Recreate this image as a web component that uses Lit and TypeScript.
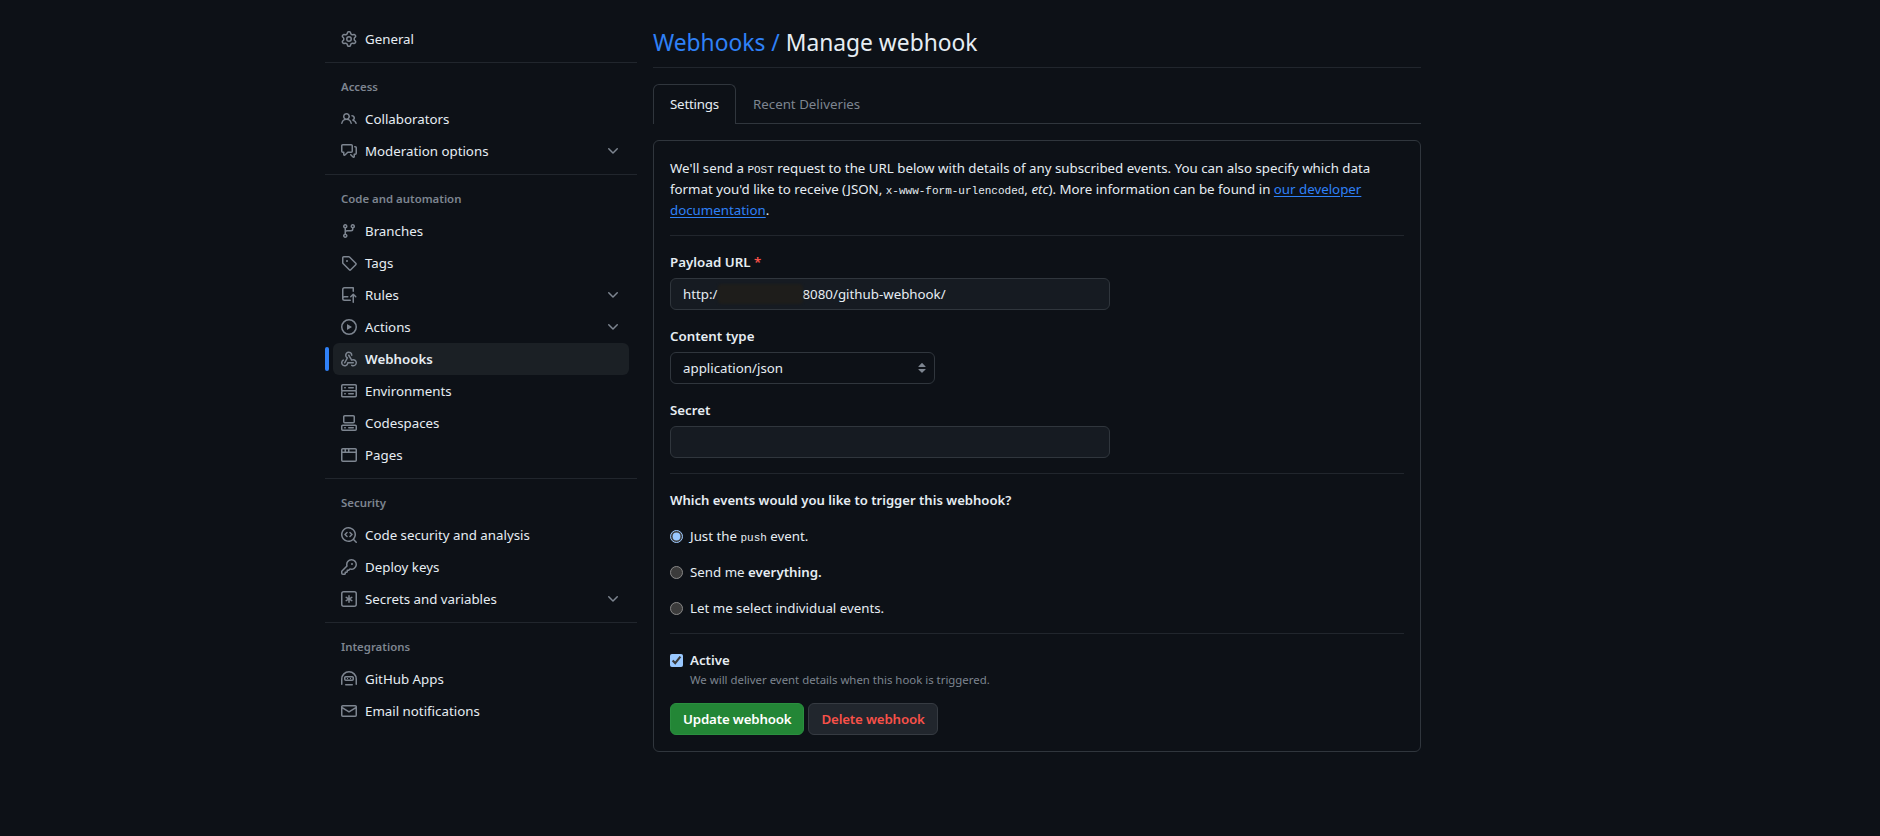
import { LitElement, html, css } from 'lit';
import { customElement } from 'lit/decorators.js';

// octicons, 16px grid
const ICONS: Record<string, string> = {
    gear: 'M8 0a8.2 8.2 0 0 1 .701.031C9.444.095 9.99.645 10.16 1.29l.288 1.107c.018.066.079.158.212.224.231.114.454.243.668.386.123.082.233.09.299.071l1.103-.303c.644-.176 1.392.021 1.82.63.27.385.506.792.704 1.218.315.675.111 1.422-.364 1.891l-.814.806c-.049.048-.098.147-.088.294.016.257.016.515 0 .772-.01.147.038.246.088.294l.814.806c.475.469.679 1.216.364 1.891a7.977 7.977 0 0 1-.704 1.217c-.428.61-1.176.807-1.82.63l-1.102-.302c-.067-.019-.177-.011-.3.071a5.909 5.909 0 0 1-.668.386c-.133.066-.194.158-.211.224l-.29 1.106c-.168.646-.715 1.196-1.458 1.26a8.006 8.006 0 0 1-1.402 0c-.743-.064-1.289-.614-1.458-1.26l-.289-1.106c-.018-.066-.079-.158-.212-.224a5.738 5.738 0 0 1-.668-.386c-.123-.082-.233-.09-.299-.071l-1.103.303c-.644.176-1.392-.021-1.82-.63a8.12 8.12 0 0 1-.704-1.218c-.315-.675-.111-1.422.363-1.891l.815-.806c.05-.048.098-.147.088-.294a6.214 6.214 0 0 1 0-.772c.01-.147-.038-.246-.088-.294l-.815-.806C.635 6.045.431 5.298.746 4.623a7.92 7.92 0 0 1 .704-1.217c.428-.61 1.176-.807 1.82-.63l1.102.302c.067.019.177.011.3-.071.214-.143.437-.272.668-.386.133-.066.194-.158.211-.224l.29-1.106C6.009.645 6.556.095 7.299.03 7.53.01 7.764 0 8 0Zm-.571 1.525c-.036.003-.108.036-.137.146l-.289 1.105c-.147.561-.549.967-.998 1.189-.173.086-.34.183-.5.29-.417.278-.97.423-1.529.27l-1.103-.303c-.109-.03-.175.016-.195.045-.22.312-.412.644-.573.99-.014.031-.021.11.059.19l.815.806c.411.406.562.957.53 1.456a4.709 4.709 0 0 0 0 .582c.032.499-.119 1.05-.53 1.456l-.815.806c-.081.08-.073.159-.059.19.162.346.353.677.573.989.02.03.085.076.195.046l1.102-.303c.56-.153 1.113-.008 1.53.27.161.107.328.204.501.29.447.222.85.629.997 1.189l.289 1.105c.029.109.101.143.137.146a6.6 6.6 0 0 0 1.142 0c.036-.003.108-.036.137-.146l.289-1.105c.147-.561.549-.967.998-1.189.173-.086.34-.183.5-.29.417-.278.97-.423 1.529-.27l1.103.303c.109.029.175-.016.195-.045.22-.313.411-.644.573-.99.014-.031.021-.11-.059-.19l-.815-.806c-.411-.406-.562-.957-.53-1.456a4.709 4.709 0 0 0 0-.582c-.032-.499.119-1.05.53-1.456l.815-.806c.081-.08.073-.159.059-.19a6.464 6.464 0 0 0-.573-.989c-.02-.03-.085-.076-.195-.046l-1.102.303c-.56.153-1.113.008-1.53-.27a4.44 4.44 0 0 0-.501-.29c-.447-.222-.85-.629-.997-1.189l-.289-1.105c-.029-.11-.101-.143-.137-.146a6.6 6.6 0 0 0-1.142 0ZM11 8a3 3 0 1 1-6 0 3 3 0 0 1 6 0ZM9.5 8a1.5 1.5 0 1 0-3.001.001A1.5 1.5 0 0 0 9.5 8Z',
    people: 'M2 5.5a3.5 3.5 0 1 1 5.898 2.549 5.508 5.508 0 0 1 3.034 4.084.75.75 0 1 1-1.482.235 4 4 0 0 0-7.9 0 .75.75 0 0 1-1.482-.236A5.507 5.507 0 0 1 3.102 8.05 3.493 3.493 0 0 1 2 5.5ZM11 4a3.001 3.001 0 0 1 2.22 5.018 5.01 5.01 0 0 1 2.56 3.012.749.749 0 0 1-.885.954.752.752 0 0 1-.549-.514 3.507 3.507 0 0 0-2.522-2.372.75.75 0 0 1-.574-.73v-.352a.75.75 0 0 1 .416-.672A1.5 1.5 0 0 0 11 5.5.75.75 0 0 1 11 4Zm-5.5-.5a2 2 0 1 0-.001 3.999A2 2 0 0 0 5.5 3.5Z',
    discussion: 'M1.75 1h8.5c.966 0 1.75.784 1.75 1.75v5.5A1.75 1.75 0 0 1 10.25 10H7.061l-2.574 2.573A1.458 1.458 0 0 1 2 11.543V10h-.25A1.75 1.75 0 0 1 0 8.25v-5.5C0 1.784.784 1 1.75 1ZM1.5 2.75v5.5c0 .138.112.25.25.25h1a.75.75 0 0 1 .75.75v2.19l2.72-2.72a.749.749 0 0 1 .53-.22h3.5a.25.25 0 0 0 .25-.25v-5.5a.25.25 0 0 0-.25-.25h-8.5a.25.25 0 0 0-.25.25Zm13 2a.25.25 0 0 0-.25-.25h-.5a.75.75 0 0 1 0-1.5h.5c.966 0 1.75.784 1.75 1.75v5.5A1.75 1.75 0 0 1 14.25 12H14v1.543a1.458 1.458 0 0 1-2.487 1.03L9.22 12.28a.749.749 0 0 1 .326-1.275.749.749 0 0 1 .734.215l2.22 2.22v-2.19a.75.75 0 0 1 .75-.75h1a.25.25 0 0 0 .25-.25Z',
    branch: 'M9.5 3.25a2.25 2.25 0 1 1 3 2.122V6A2.5 2.5 0 0 1 10 8.5H6a1 1 0 0 0-1 1v1.128a2.251 2.251 0 1 1-1.5 0V5.372a2.25 2.25 0 1 1 1.5 0v1.836A2.493 2.493 0 0 1 6 7h4a1 1 0 0 0 1-1v-.628A2.25 2.25 0 0 1 9.5 3.25Zm-6 0a.75.75 0 1 0 1.5 0 .75.75 0 0 0-1.5 0Zm8.25-.75a.75.75 0 1 0 0 1.5.75.75 0 0 0 0-1.5ZM4.25 12a.75.75 0 1 0 0 1.5.75.75 0 0 0 0-1.5Z',
    tag: 'M1 7.775V2.75C1 1.784 1.784 1 2.75 1h5.025c.464 0 .91.184 1.238.513l6.25 6.25a1.75 1.75 0 0 1 0 2.474l-5.026 5.026a1.75 1.75 0 0 1-2.474 0l-6.25-6.25A1.752 1.752 0 0 1 1 7.775Zm1.5 0c0 .066.026.13.073.177l6.25 6.25a.25.25 0 0 0 .354 0l5.025-5.025a.25.25 0 0 0 0-.354l-6.25-6.25a.25.25 0 0 0-.177-.073H2.75a.25.25 0 0 0-.25.25ZM6 5a1 1 0 1 1 0 2 1 1 0 0 1 0-2Z',
    rules: 'M1 2.5A2.5 2.5 0 0 1 3.5 0h8.75a.75.75 0 0 1 .75.75v3.5a.75.75 0 0 1-1.5 0V1.5h-8a1 1 0 0 0-1 1v6.708A2.493 2.493 0 0 1 3.5 9h3.25a.75.75 0 0 1 0 1.5H3.5a1 1 0 0 0 0 2h5.75a.75.75 0 0 1 0 1.5H3.5A2.5 2.5 0 0 1 1 11.5Zm13.23 7.79h-.001l-1.224-1.224v6.184a.75.75 0 0 1-1.5 0V9.066L10.28 10.29a.75.75 0 0 1-1.06-1.061l2.505-2.504a.75.75 0 0 1 1.06 0L15.29 9.23a.751.751 0 0 1-.018 1.042.751.751 0 0 1-1.042.018Z',
    play: 'M8 0a8 8 0 1 1 0 16A8 8 0 0 1 8 0ZM1.5 8a6.5 6.5 0 1 0 13 0 6.5 6.5 0 0 0-13 0Zm4.879-2.773 4.264 2.559a.25.25 0 0 1 0 .428l-4.264 2.559A.25.25 0 0 1 6 10.559V5.442a.25.25 0 0 1 .379-.215Z',
    webhook: 'M5.5 4.25a2.25 2.25 0 0 1 4.5 0 .75.75 0 0 0 1.5 0 3.75 3.75 0 1 0-6.14 2.889l-2.272 4.258a.75.75 0 0 0 1.324.706L7 7.25a.75.75 0 0 0-.309-1.015A2.25 2.25 0 0 1 5.5 4.25Z M7.364 3.607a.75.75 0 0 1 1.03.257l2.608 4.349a3.75 3.75 0 1 1-.628 6.785.75.75 0 0 1 .752-1.299 2.25 2.25 0 1 0-.033-3.88.75.75 0 0 1-1.03-.256L7.107 4.636a.75.75 0 0 1 .257-1.03Z M2.9 8.776A.75.75 0 0 1 2.625 9.8 2.25 2.25 0 1 0 6 11.75a.75.75 0 0 1 .75-.751h5.5a.75.75 0 0 1 0 1.5H7.425a3.751 3.751 0 1 1-5.55-3.998.75.75 0 0 1 1.024.274Z',
    server: 'M1.75 1h12.5c.966 0 1.75.784 1.75 1.75v4c0 .372-.116.717-.314 1 .198.283.314.628.314 1v4a1.75 1.75 0 0 1-1.75 1.75H1.75A1.75 1.75 0 0 1 0 13.25v-4c0-.372.116-.717.314-1a1.739 1.739 0 0 1-.314-1v-4C0 1.784.784 1 1.75 1ZM1.5 2.75v4c0 .138.112.25.25.25h12.5a.25.25 0 0 0 .25-.25v-4a.25.25 0 0 0-.25-.25H1.75a.25.25 0 0 0-.25.25Zm.25 5.75a.25.25 0 0 0-.25.25v4c0 .138.112.25.25.25h12.5a.25.25 0 0 0 .25-.25v-4a.25.25 0 0 0-.25-.25ZM7 4.75A.75.75 0 0 1 7.75 4h4.5a.75.75 0 0 1 0 1.5h-4.5A.75.75 0 0 1 7 4.75ZM7.75 10h4.5a.75.75 0 0 1 0 1.5h-4.5a.75.75 0 0 1 0-1.5ZM3 4.75A.75.75 0 0 1 3.75 4h.5a.75.75 0 0 1 0 1.5h-.5A.75.75 0 0 1 3 4.75ZM3.75 10h.5a.75.75 0 0 1 0 1.5h-.5a.75.75 0 0 1 0-1.5Z',
    codespaces: 'M0 11.25c0-.966.784-1.75 1.75-1.75h12.5c.966 0 1.75.784 1.75 1.75v3A1.75 1.75 0 0 1 14.25 16H1.75A1.75 1.75 0 0 1 0 14.25Zm2-9.5C2 .784 2.784 0 3.75 0h8.5C13.216 0 14 .784 14 1.75v5a1.75 1.75 0 0 1-1.75 1.75h-8.5A1.75 1.75 0 0 1 2 6.75Zm1.75-.25a.25.25 0 0 0-.25.25v5c0 .138.112.25.25.25h8.5a.25.25 0 0 0 .25-.25v-5a.25.25 0 0 0-.25-.25Zm-2 9.5a.25.25 0 0 0-.25.25v3c0 .138.112.25.25.25h12.5a.25.25 0 0 0 .25-.25v-3a.25.25 0 0 0-.25-.25Z M7 12.75a.75.75 0 0 1 .75-.75h4.5a.75.75 0 0 1 0 1.5h-4.5a.75.75 0 0 1-.75-.75Zm-4 0a.75.75 0 0 1 .75-.75h.5a.75.75 0 0 1 0 1.5h-.5a.75.75 0 0 1-.75-.75Z',
    browser: 'M0 2.75C0 1.784.784 1 1.75 1h12.5c.966 0 1.75.784 1.75 1.75v10.5A1.75 1.75 0 0 1 14.25 15H1.75A1.75 1.75 0 0 1 0 13.25ZM14.5 6h-13v7.25c0 .138.112.25.25.25h12.5a.25.25 0 0 0 .25-.25Zm-6-3.5v2h6v-1.75a.25.25 0 0 0-.25-.25ZM5 2.5v2h2v-2Zm-3.25 0a.25.25 0 0 0-.25.25V4.5h2v-2Z',
    codescan: 'M8.47 4.97a.75.75 0 0 0 0 1.06L9.94 7.5 8.47 8.97a.75.75 0 1 0 1.06 1.06l2-2a.75.75 0 0 0 0-1.06l-2-2a.75.75 0 0 0-1.06 0ZM6.53 6.03a.75.75 0 0 0-1.06-1.06l-2 2a.75.75 0 0 0 0 1.06l2 2a.75.75 0 1 0 1.06-1.06L5.06 7.5l1.47-1.47Z M12.246 13.307a7.501 7.501 0 1 1 1.06-1.06l2.474 2.473a.749.749 0 0 1-.326 1.275.749.749 0 0 1-.734-.215ZM1.5 7.5a6.002 6.002 0 0 0 3.608 5.504 6.002 6.002 0 0 0 6.486-1.117.748.748 0 0 1 .292-.293A6 6 0 1 0 1.5 7.5Z',
    key: 'M10.5 0a5.499 5.499 0 1 1-1.288 10.848l-.932.932a.749.749 0 0 1-.53.22H7v.75a.749.749 0 0 1-.22.53l-.5.5a.749.749 0 0 1-.53.22H5v.75a.749.749 0 0 1-.22.53l-.5.5a.749.749 0 0 1-.53.22h-2A1.75 1.75 0 0 1 0 14.25v-2c0-.199.079-.389.22-.53l4.932-4.932A5.5 5.5 0 0 1 10.5 0Zm-4 5.5c-.001.431.069.86.205 1.269a.75.75 0 0 1-.181.768L1.5 12.56v1.69c0 .138.112.25.25.25h1.69l.06-.06v-1.19a.75.75 0 0 1 .75-.75h1.19l.06-.06v-1.19a.75.75 0 0 1 .75-.75h1.19l1.023-1.025a.75.75 0 0 1 .768-.18A4 4 0 1 0 6.5 5.5ZM11 6a1 1 0 1 1 0-2 1 1 0 0 1 0 2Z',
    asterisk: 'M0 2.75A2.75 2.75 0 0 1 2.75 0h10.5A2.75 2.75 0 0 1 16 2.75v10.5A2.75 2.75 0 0 1 13.25 16H2.75A2.75 2.75 0 0 1 0 13.25ZM2.75 1.5c-.69 0-1.25.56-1.25 1.25v10.5c0 .69.56 1.25 1.25 1.25h10.5c.69 0 1.25-.56 1.25-1.25V2.75c0-.69-.56-1.25-1.25-1.25Z M8 4a.75.75 0 0 1 .75.75V6.7l1.69-.975a.75.75 0 0 1 .75 1.3L9.5 8l1.69.976a.75.75 0 0 1-.75 1.299L8.75 9.3v1.95a.75.75 0 0 1-1.5 0V9.3l-1.69.975a.751.751 0 0 1-1.025-.275.75.75 0 0 1 .275-1.024L6.5 8l-1.69-.976a.75.75 0 0 1 .75-1.298l1.69.975V4.75A.75.75 0 0 1 8 4Z',
    hubot: 'M0 8a8 8 0 0 1 16 0v5.25a.75.75 0 0 1-1.5 0V8a6.5 6.5 0 1 0-13 0v5.25a.75.75 0 0 1-1.5 0Z M4.75 5h6.5C12.216 5 13 5.784 13 6.75v1.5A1.75 1.75 0 0 1 11.25 10h-6.5A1.75 1.75 0 0 1 3 8.25v-1.5C3 5.784 3.784 5 4.75 5Zm0 1.5a.25.25 0 0 0-.25.25v1.5c0 .138.112.25.25.25h6.5a.25.25 0 0 0 .25-.25v-1.5a.25.25 0 0 0-.25-.25ZM6 7h1v1H6Zm3 0h1v1H9ZM4.75 13h6.5a.75.75 0 0 1 0 1.5h-6.5a.75.75 0 0 1 0-1.5Z',
    mail: 'M1.75 2h12.5c.966 0 1.75.784 1.75 1.75v8.5A1.75 1.75 0 0 1 14.25 14H1.75A1.75 1.75 0 0 1 0 12.25v-8.5C0 2.784.784 2 1.75 2ZM1.5 12.251c0 .138.112.25.25.25h12.5a.25.25 0 0 0 .25-.25V5.809L8.38 9.397a.75.75 0 0 1-.76 0L1.5 5.809v6.442Zm13-8.181v-.32a.25.25 0 0 0-.25-.25H1.75a.25.25 0 0 0-.25.25v.32L8 7.88Z',
    chevron: 'M12.78 5.22a.749.749 0 0 1 0 1.06l-4.25 4.25a.749.749 0 0 1-1.06 0L3.22 6.28a.749.749 0 1 1 1.06-1.06L8 8.939l3.72-3.719a.749.749 0 0 1 1.06 0Z',
};

interface NavItem {
    icon: string;
    label: string;
    more?: boolean;
    active?: boolean;
}

interface NavGroup {
    title?: string;
    items: NavItem[];
}

const NAV: NavGroup[] = [
    { items: [{ icon: 'gear', label: 'General' }] },
    {
        title: 'Access',
        items: [
            { icon: 'people', label: 'Collaborators' },
            { icon: 'discussion', label: 'Moderation options', more: true },
        ],
    },
    {
        title: 'Code and automation',
        items: [
            { icon: 'branch', label: 'Branches' },
            { icon: 'tag', label: 'Tags' },
            { icon: 'rules', label: 'Rules', more: true },
            { icon: 'play', label: 'Actions', more: true },
            { icon: 'webhook', label: 'Webhooks', active: true },
            { icon: 'server', label: 'Environments' },
            { icon: 'codespaces', label: 'Codespaces' },
            { icon: 'browser', label: 'Pages' },
        ],
    },
    {
        title: 'Security',
        items: [
            { icon: 'codescan', label: 'Code security and analysis' },
            { icon: 'key', label: 'Deploy keys' },
            { icon: 'asterisk', label: 'Secrets and variables', more: true },
        ],
    },
    {
        title: 'Integrations',
        items: [
            { icon: 'hubot', label: 'GitHub Apps' },
            { icon: 'mail', label: 'Email notifications' },
        ],
    },
];

const icon = (name: string) => html`<svg class="icon" viewBox="0 0 16 16" fill="currentColor">
    <path fill-rule="evenodd" d=${ICONS[name]}></path>
</svg>`;

@customElement('app-root')
export class AppRoot extends LitElement {
    static override styles = css`
        :host {
            display: block;
            min-height: 100vh;
            background: #0d1117;
            color: #e6edf3;
            font-family: 'Noto Sans', sans-serif;
            font-size: 13.3px;
            line-height: 21px;
        }
        .page {
            display: flex;
            gap: 16px;
            width: 1096px;
            margin-left: 325px;
            padding-top: 23px;
        }

        /* sidebar */
        .side {
            width: 312px;
            flex: none;
        }
        .group + .group {
            margin-top: 7px;
            border-top: 1px solid #21262d;
            padding-top: 8px;
        }
        .group-title {
            height: 32px;
            box-sizing: border-box;
            padding: 0 0 2px 16px;
            display: flex;
            align-items: center;
            font-size: 11.4px;
            font-weight: 600;
            color: #7d8590;
        }
        .row {
            position: relative;
            display: flex;
            align-items: center;
            height: 32px;
            margin: 0 8px;
            padding: 0 8px;
            border-radius: 6px;
        }
        .row .icon {
            color: #7d8590;
            margin-right: 8px;
        }
        .row .chev {
            margin-left: auto;
            margin-right: 0;
        }
        .row.active {
            background: #1b2025;
            font-weight: 600;
        }
        .row.active::before {
            content: '';
            position: absolute;
            left: -8px;
            top: 4px;
            width: 4px;
            height: 24px;
            border-radius: 6px;
            background: #2f81f7;
        }
        .icon {
            width: 16px;
            height: 16px;
            flex: none;
        }

        /* main column */
        .main {
            width: 768px;
            flex: none;
        }
        .head {
            padding: 5px 0 9px;
            border-bottom: 1px solid #21262d;
        }
        h1 {
            margin: 0;
            font-size: 22.8px;
            line-height: 30px;
            font-weight: 400;
        }
        a {
            color: #2f81f7;
            text-decoration: none;
        }
        .tabs {
            display: flex;
            height: 40px;
            margin-top: 16px;
            border-bottom: 1px solid #30363d;
            box-sizing: border-box;
        }
        .tab {
            height: 40px;
            box-sizing: border-box;
            padding: 9px 16px;
            border: 1px solid transparent;
            border-bottom: 0;
            border-radius: 6px 6px 0 0;
            color: #7d8590;
        }
        .tab.on {
            color: #e6edf3;
            letter-spacing: -0.2px;
            border-color: #30363d;
            background: #0d1117;
        }
        .box {
            margin-top: 16px;
            padding: 16px;
            border: 1px solid #30363d;
            border-radius: 6px;
        }
        .box p {
            margin: 1px 0 -1px;
        }
        .box p a {
            text-decoration: underline;
            text-underline-offset: 2px;
        }
        code {
            font-family: 'Liberation Mono', monospace;
            font-size: 11px;
            line-height: 0;
        }
        b {
            font-weight: 600;
        }
        hr {
            border: 0;
            border-top: 1px solid #21262d;
            margin: 15px 0 0;
        }
        .label {
            display: block;
            height: 20px;
            line-height: 20px;
            font-weight: 600;
            margin: 16px 0 6px;
        }
        .req {
            color: #f85149;
        }
        .field {
            display: flex;
            align-items: center;
            width: 440px;
            height: 32px;
            box-sizing: border-box;
            padding: 0 12px;
            background: #161b22;
            border: 1px solid #30363d;
            border-radius: 6px;
        }
        .blur {
            width: 85px;
            height: 20px;
            flex: none;
            border-radius: 4px;
            background: #1e1d1b;
            filter: blur(1px);
        }
        .select {
            position: relative;
            width: 265px;
            height: 32px;
        }
        .select select {
            appearance: none;
            width: 100%;
            height: 100%;
            padding: 0 12px;
            background: #0d1117;
            color: #e6edf3;
            border: 1px solid #30363d;
            border-radius: 6px;
            font: inherit;
        }
        .select svg {
            position: absolute;
            right: 5px;
            top: 8px;
            width: 16px;
            height: 16px;
            fill: #7d8590;
        }
        .ask {
            height: 20px;
            line-height: 20px;
            font-size: 13.1px;
            font-weight: 600;
            margin: 16px 0;
        }
        .radios {
            display: flex;
            flex-direction: column;
            gap: 15px;
        }
        .opt {
            display: flex;
            align-items: center;
            gap: 7px;
            height: 21px;
            white-space: pre;
        }
        input {
            color-scheme: dark;
            width: 13px;
            height: 13px;
            margin: 0;
        }
        .active-row {
            margin-top: 16px;
            font-weight: 600;
            height: 20px;
            line-height: 20px;
        }
        .note {
            margin-left: 20px;
            margin-top: 1px;
            font-size: 11.4px;
            line-height: 18px;
            color: #7d8590;
        }
        .actions {
            display: flex;
            gap: 4px;
            margin-top: 14px;
        }
        .btn {
            height: 32px;
            padding: 0 12px;
            box-sizing: border-box;
            border-radius: 6px;
            border: 1px solid #363b42;
            background: #21262d;
            color: #f85149;
            font: inherit;
            font-weight: 600;
            letter-spacing: -0.17px;
        }
        .btn.primary {
            background: #238636;
            border-color: #2a8f3f;
            color: #fff;
        }
    `;

    private renderRow(item: NavItem) {
        return html`<div class="row ${item.active ? 'active' : ''}">
            ${icon(item.icon)}
            <span>${item.label}</span>
            ${item.more
                ? html`<svg class="icon chev" viewBox="0 0 16 16" fill="currentColor"><path d=${ICONS.chevron}></path></svg>`
                : ''}
        </div>`;
    }

    override render() {
        return html`
            <div class="page">
                <nav class="side">
                    ${NAV.map(
                        (g) => html`<div class="group">
                            ${g.title ? html`<div class="group-title">${g.title}</div>` : ''}
                            ${g.items.map((i) => this.renderRow(i))}
                        </div>`
                    )}
                </nav>
                <main class="main">
                    <div class="head">
                        <h1><a href="#">Webhooks /</a> Manage webhook</h1>
                    </div>
                    <div class="tabs">
                        <div class="tab on">Settings</div>
                        <div class="tab">Recent Deliveries</div>
                    </div>
                    <div class="box">
                        <p>
                            We'll send a <code>POST</code> request to the URL below with details of any subscribed
                            events. You can also specify which data format you'd like to receive (JSON,
                            <code>x-www-form-urlencoded</code>, <em>etc</em>). More information can be found in
                            <a href="#">our developer documentation</a>.
                        </p>
                        <hr />
                        <label class="label">Payload URL <span class="req">*</span></label>
                        <div class="field">http:/<span class="blur"></span>8080/github-webhook/</div>
                        <label class="label">Content type</label>
                        <div class="select">
                            <select><option>application/json</option></select>
                            <svg viewBox="0 0 16 16"><path d="M4.427 9.427l3.396 3.396a.25.25 0 0 0 .354 0l3.396-3.396A.25.25 0 0 0 11.396 9H4.604a.25.25 0 0 0-.177.427ZM4.423 6.47 7.82 3.072a.25.25 0 0 1 .354 0L11.57 6.47a.25.25 0 0 1-.177.427H4.6a.25.25 0 0 1-.177-.427Z"></path></svg>
                        </div>
                        <label class="label">Secret</label>
                        <div class="field"></div>
                        <hr />
                        <div class="ask">Which events would you like to trigger this webhook?</div>
                        <div class="radios">
                            <label class="opt"><input type="radio" name="ev" checked /><span>Just the <code>push</code> event.</span></label>
                            <label class="opt"><input type="radio" name="ev" /><span>Send me <b>everything.</b></span></label>
                            <label class="opt"><input type="radio" name="ev" /><span>Let me select individual events.</span></label>
                        </div>
                        <hr style="margin-top:14px" />
                        <label class="opt active-row"><input type="checkbox" checked /><span>Active</span></label>
                        <div class="note">We will deliver event details when this hook is triggered.</div>
                        <div class="actions">
                            <button class="btn primary">Update webhook</button>
                            <button class="btn">Delete webhook</button>
                        </div>
                    </div>
                </main>
            </div>
        `;
    }
}
